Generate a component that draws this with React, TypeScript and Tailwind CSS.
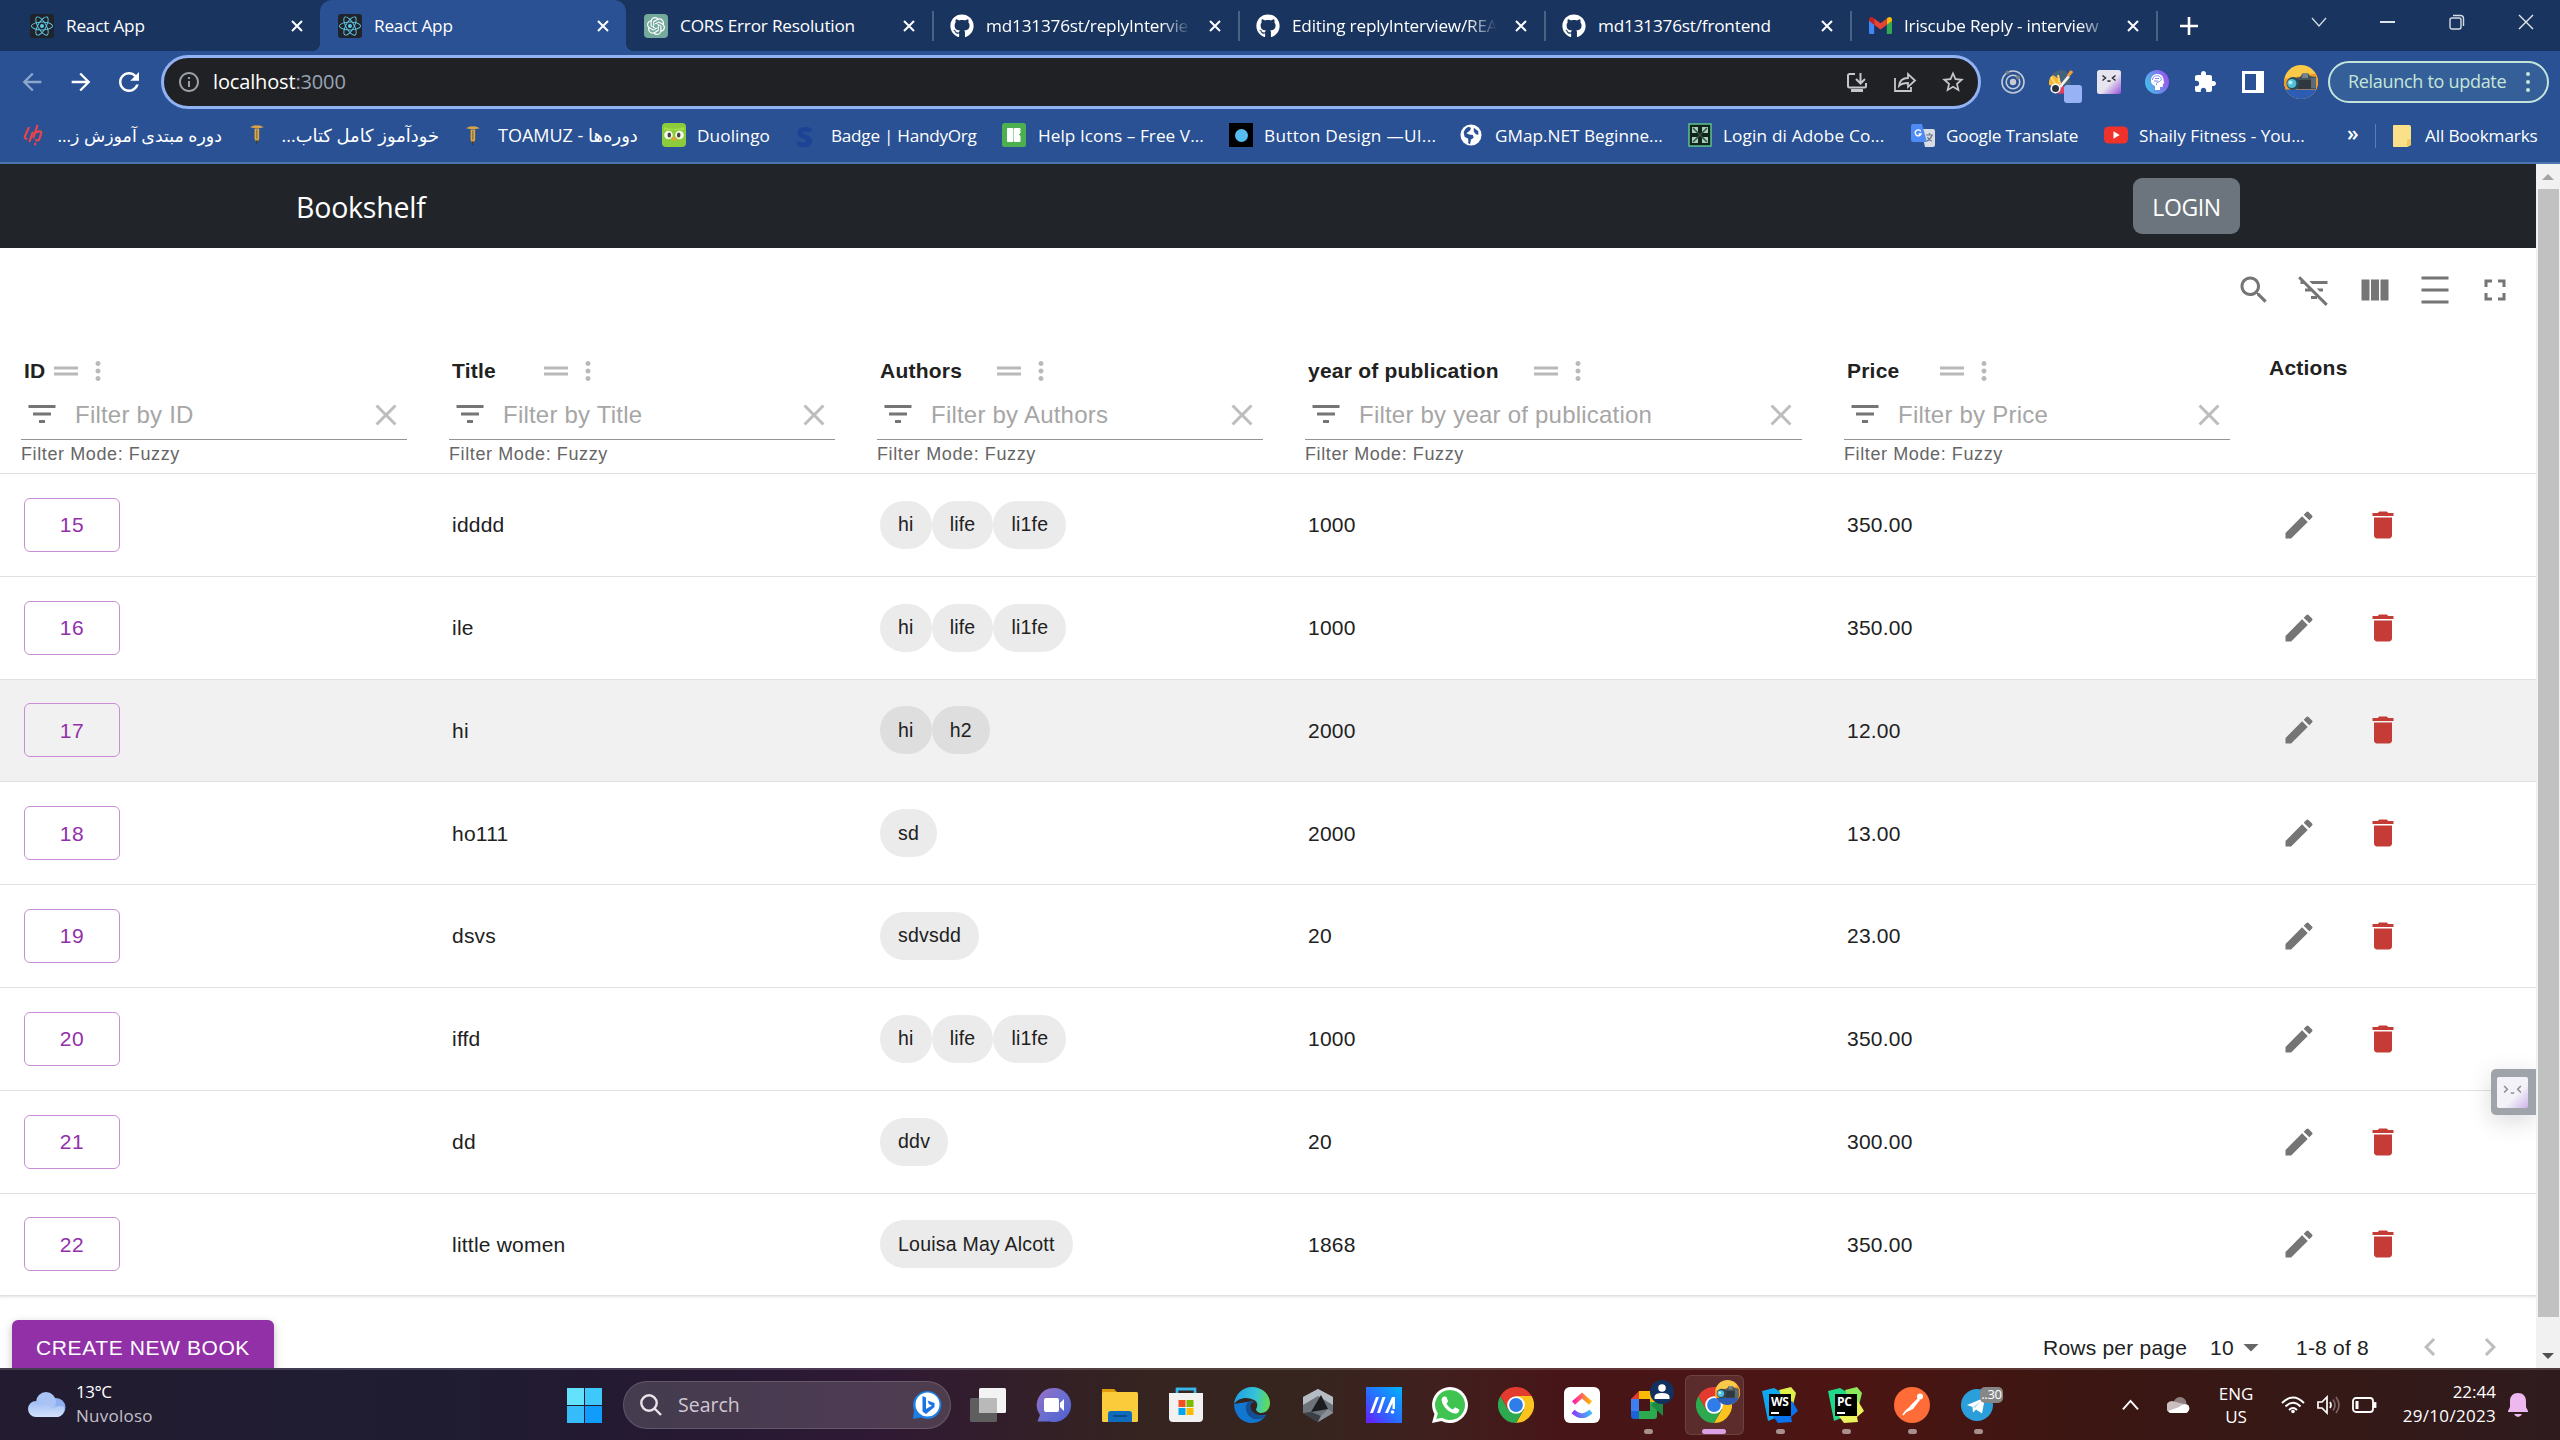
import React from "react";
import { FaReact, FaGithub } from "react-icons/fa";
import { SiOpenai } from "react-icons/si";

type IconProps = { d: string; className?: string };

/* Material-style glyph on a 24-unit grid */
const Glyph = ({ d, className = "size-9" }: IconProps) => (
  <svg viewBox="0 0 24 24" fill="currentColor" className={`shrink-0 ${className}`}>
    <path d={d} />
  </svg>
);

const P = {
  search:
    "M15.5 14h-.79l-.28-.27C15.41 12.59 16 11.11 16 9.5 16 5.91 13.09 3 9.5 3S3 5.91 3 9.5 5.91 16 9.5 16c1.61 0 3.09-.59 4.23-1.57l.27.28v.79l5 4.99L20.49 19l-4.99-5zm-6 0C7.01 14 5 11.99 5 9.5S7.01 5 9.5 5 14 7.01 14 9.5 11.99 14 9.5 14z",
  filterOff:
    "M10.83 8H21V6H8.83l2 2zm5 5H18v-2h-4.17l2 2zM14 16.83V18h-4v-2h3.17l-3-3H6v-2h2.17l-3-3H3V6h.17L1.39 4.22 2.8 2.81l18.38 18.38-1.41 1.41L14 16.83z",
  columns: "M14.67 5v14H9.33V5h5.34zm1 14H21V5h-5.33v14zm-7.34 0V5H3v14h5.33z",
  density: "M3 3h18v2H3zm0 16h18v2H3zm0-8h18v2H3z",
  fullscreen:
    "M7 14H5v5h5v-2H7v-3zm-2-4h2V7h3V5H5v5zm12 7h-3v2h5v-5h-2v3zM14 5v2h3v3h2V5h-5z",
  drag: "M20 9H4v2h16V9zM4 15h16v-2H4v2z",
  more: "M12 8c1.1 0 2-.9 2-2s-.9-2-2-2-2 .9-2 2 .9 2 2 2zm0 2c-1.1 0-2 .9-2 2s.9 2 2 2 2-.9 2-2-.9-2-2-2zm0 6c-1.1 0-2 .9-2 2s.9 2 2 2 2-.9 2-2-.9-2-2-2z",
  filter: "M10 18h4v-2h-4v2zM3 6v2h18V6H3zm3 7h12v-2H6v2z",
  close:
    "M19 6.41 17.59 5 12 10.59 6.41 5 5 6.41 10.59 12 5 17.59 6.41 19 12 13.41 17.59 19 19 17.59 13.41 12z",
  edit: "M3 17.25V21h3.75L17.81 9.94l-3.75-3.75L3 17.25zM20.71 7.04c.39-.39.39-1.02 0-1.41l-2.34-2.34a.9959.9959 0 0 0-1.41 0l-1.83 1.83 3.75 3.75 1.83-1.83z",
  trash: "M6 19c0 1.1.9 2 2 2h8c1.1 0 2-.9 2-2V7H6v12zM19 4h-3.5l-1-1h-5l-1 1H5v2h14V4z",
  left: "M15.41 7.41 14 6l-6 6 6 6 1.41-1.41L10.83 12z",
  right: "M10 6 8.59 7.41 13.17 12l-4.58 4.59L10 18l6-6z",
  drop: "m7 10 5 5 5-5z",
  back: "M20 11H7.83l5.59-5.59L12 4l-8 8 8 8 1.41-1.41L7.83 13H20v-2z",
  forward: "m12 4-1.41 1.41L16.17 11H4v2h12.17l-5.58 5.59L12 20l8-8z",
  reload:
    "M17.65 6.35C16.2 4.9 14.21 4 12 4c-4.42 0-7.99 3.58-7.99 8s3.57 8 7.99 8c3.73 0 6.84-2.55 7.73-6h-2.08c-.82 2.33-3.04 4-5.65 4-3.31 0-6-2.69-6-6s2.69-6 6-6c1.66 0 3.14.69 4.22 1.78L13 11h7V4l-2.35 2.35z",
  info: "M11 7h2v2h-2zm0 4h2v6h-2zm1-9C6.48 2 2 6.48 2 12s4.48 10 10 10 10-4.48 10-10S17.52 2 12 2zm0 18c-4.41 0-8-3.59-8-8s3.59-8 8-8 8 3.59 8 8-3.59 8-8 8z",
  star: "m22 9.24-7.19-.62L12 2 9.19 8.63 2 9.24l5.46 4.73L5.82 21 12 17.27 18.18 21l-1.63-7.03L22 9.24zM12 15.4l-3.76 2.27 1-4.28-3.32-2.88 4.38-.38L12 6.1l1.71 4.04 4.38.38-3.32 2.88 1 4.28L12 15.4z",
  puzzle:
    "M20.5 11H19V7c0-1.1-.9-2-2-2h-4V3.5C13 2.12 11.88 1 10.5 1S8 2.12 8 3.5V5H4c-1.1 0-1.99.9-1.99 2v3.8H3.5c1.49 0 2.7 1.21 2.7 2.7s-1.21 2.7-2.7 2.7H2V20c0 1.1.9 2 2 2h3.8v-1.5c0-1.49 1.21-2.7 2.7-2.7s2.7 1.21 2.7 2.7V22H17c1.1 0 2-.9 2-2v-4h1.5c1.38 0 2.5-1.12 2.5-2.5S21.88 11 20.5 11z",
};

/* ---------- browser tabs ---------- */

const ReactBadge = () => (
  <span className="flex size-6 items-center justify-center rounded-[3px] bg-[#20232a]">
    <FaReact className="size-[22px] text-[#5fc9e8]" />
  </span>
);

const Gmail = () => (
  <svg viewBox="0 0 24 18" className="w-[23px]">
    <path d="M0 2.5V16a2 2 0 0 0 2 2h3.4V8z" fill="#4285f4" />
    <path d="M24 2.5V16a2 2 0 0 1-2 2h-3.4V8z" fill="#34a853" />
    <path d="M18.6 1.5V8L24 4V2.6C24 .2 21.6-.7 19.8.6z" fill="#fbbc04" />
    <path d="M5.4 8V1.5L12 6.5l6.6-5V8L12 13z" fill="#ea4335" />
    <path d="M0 2.6V4l5.4 4V1.5L4.2.6C2.4-.7 0 .2 0 2.6z" fill="#c5221f" />
  </svg>
);

const Github = () => <FaGithub className="size-6 text-white" />;

const OpenAi = () => (
  <span className="flex size-6 items-center justify-center rounded-[4px] bg-[#75a99c]">
    <SiOpenai className="size-[18px] text-white" />
  </span>
);

const tabs = [
  { title: "React App", icon: <ReactBadge />, first: true },
  { title: "React App", icon: <ReactBadge />, active: true },
  { title: "CORS Error Resolution", icon: <OpenAi /> },
  { title: "md131376st/replyIntervie", icon: <Github />, divider: true, fade: true },
  { title: "Editing replyInterview/REA", icon: <Github />, divider: true, fade: true },
  { title: "md131376st/frontend", icon: <Github />, divider: true },
  { title: "Iriscube Reply - interview", icon: <Gmail />, divider: true, fade: true },
];

const CloseX = () => (
  <svg viewBox="0 0 12 12" className="size-3 shrink-0" stroke="#fff" strokeWidth="2">
    <path d="M1 1l10 10M11 1L1 11" />
  </svg>
);

type TabProps = {
  title: string;
  icon: React.ReactNode;
  active?: boolean;
  first?: boolean;
  divider?: boolean;
  fade?: boolean;
};

const Tab = ({ title, icon, active, first, divider, fade }: TabProps) => (
  <div
    className={`relative flex h-[51px] shrink-0 items-center pl-[18px] ${first ? "w-[308px]" : "w-[306px]"} ${
      active ? "rounded-t-xl bg-[#295194]" : ""
    }`}
  >
    {divider && <span className="absolute top-[11px] left-0 h-[30px] w-[2px] bg-[#4b6285]" />}
    {active && (
      <>
        <span className="absolute bottom-0 -left-2 size-2 bg-[radial-gradient(circle_at_0_0,transparent_8px,#295194_8px)]" />
        <span className="absolute -right-2 bottom-0 size-2 bg-[radial-gradient(circle_at_100%_0,transparent_8px,#295194_8px)]" />
      </>
    )}
    <span className="flex w-6 shrink-0 justify-center">{icon}</span>
    <span
      className={`ml-3 shrink-0 text-[17.2px] tracking-[-0.2px] whitespace-nowrap text-white ${
        first ? "w-[209px]" : "w-[207px]"
      } ${fade ? "[mask-image:linear-gradient(to_right,#000_85%,transparent_99%)]" : ""}`}
    >
      {title}
    </span>
    <span className="ml-4">
      <CloseX />
    </span>
  </div>
);

const TabStrip = () => (
  <div className="flex h-[51px] bg-[#19345f] pl-3">
    {tabs.map((t, i) => (
      <Tab key={i} {...t} />
    ))}
    <div className="relative flex w-[66px] items-center justify-center">
      <span className="absolute top-[11px] left-0 h-[30px] w-[2px] bg-[#4b6285]" />
      <svg viewBox="0 0 18 18" className="size-[18px]" stroke="#fff" strokeWidth="2.6">
        <path d="M9 0v18M0 9h18" />
      </svg>
    </div>
    <div className="ml-auto flex h-[43px] items-center">
      <span className="flex w-[69px] justify-center">
        <svg viewBox="0 0 16 10" className="w-4" fill="none" stroke="#d5dbe5" strokeWidth="1.3">
          <path d="M1 1l7 8 7-8" />
        </svg>
      </span>
      <span className="flex w-[69px] justify-center">
        <span className="h-[2px] w-[15px] bg-[#dfe4ec]" />
      </span>
      <span className="flex w-[69px] justify-center">
        <svg viewBox="0 0 16 16" className="size-4" fill="none" stroke="#d5dbe5" strokeWidth="1.4">
          <rect x="1" y="4" width="11" height="11" rx="2" />
          <path d="M4 1.5h7.500a3 3 0 0 1 3 3V12" />
        </svg>
      </span>
      <span className="flex w-[69px] justify-center">
        <svg viewBox="0 0 16 16" className="size-4" fill="none" stroke="#e5e9f0" strokeWidth="1.4">
          <path d="M1 1l14 14M15 1L1 15" />
        </svg>
      </span>
    </div>
  </div>
);

/* ---------- address bar ---------- */

const Face = ({ className = "" }) => (
  <svg viewBox="0 0 24 24" className={className}>
    <defs>
      <linearGradient id="face" x1="0" y1="0" x2="1" y2="1">
        <stop offset="0.55" stopColor="#e6e4ef" />
        <stop offset="1" stopColor="#9a4fd8" />
      </linearGradient>
    </defs>
    <rect width="24" height="24" rx="2.5" fill="url(#face)" />
    <path
      d="M5.500 5.500l3 2.500-3 2.500M18.500 5.500l-3 2.500 3 2.500M10.500 10.500q1.500 1.600 3 0"
      fill="none"
      stroke="#2b2b33"
      strokeWidth="1.5"
    />
  </svg>
);

const FaceTab = ({ className = "" }) => (
  <svg viewBox="0 0 24 24" className={className}>
    <defs>
      <linearGradient id="faceTab" x1="0" y1="0" x2="1" y2="1">
        <stop offset="0.6" stopColor="#f3f2f8" />
        <stop offset="1" stopColor="#cdb4ec" />
      </linearGradient>
    </defs>
    <rect width="24" height="24" rx="1.500" fill="url(#faceTab)" />
    <path
      d="M5.500 7l2.500 2.500L5.500 12M18.500 7L16 9.500l2.500 2.500M10.800 12q1.200 1.200 2.400 0"
      fill="none"
      stroke="#8d8d94"
      strokeWidth="1.2"
    />
  </svg>
);

const Camera = ({ className = "" }) => (
  <svg viewBox="0 0 34 34" className={className}>
    <clipPath id="cam">
      <circle cx="17" cy="17" r="17" />
    </clipPath>
    <g clipPath="url(#cam)">
      <rect width="34" height="34" fill="#fbc94a" />
      <path d="M0 14l34-6v18H0z" fill="#f59a24" />
      <rect y="24.5" width="34" height="10" fill="#2c5cb4" />
      <path d="M6 14l10-2 3-4h5l2 3 6 1v12H12z" fill="#46525a" />
      <path d="M19 8h5v5h-6z" fill="#77848c" />
      <path d="M14 15h13v9H14z" fill="#2f383f" />
      <path d="M27 13h5v10h-5z" fill="#5c6a73" />
      <circle cx="9" cy="18.500" r="6.500" fill="#2d4b57" />
      <circle cx="7.800" cy="18.500" r="4.600" fill="#4fc0d6" />
      <circle cx="6.500" cy="17.500" r="2" fill="#b2f0f6" />
    </g>
  </svg>
);

const Toolbar = () => (
  <div className="flex h-[62px] items-center bg-[#295194] pl-2">
    <span className="flex w-12 justify-center text-[#8fa6cb]">
      <Glyph d={P.back} className="size-7" />
    </span>
    <span className="flex w-[50px] justify-center text-white">
      <Glyph d={P.forward} className="size-7" />
    </span>
    <span className="flex w-[46px] justify-center text-white">
      <Glyph d={P.reload} className="size-[30px]" />
    </span>
    <div className="ml-[9px] flex h-[54px] w-[1820px] items-center rounded-full border-[3px] border-[#92b2f3] bg-[#202124] pl-[13px]">
      <Glyph d={P.info} className="size-6 text-[#9aa0a6]" />
      <span className="ml-[12px] pb-px text-[20px] tracking-[-0.15px] text-white">
        localhost<span className="text-[#9aa3b5]">:3000</span>
      </span>
      <div className="ml-auto flex items-center pr-[1px] text-[#c4c7cc]">
        <span className="flex w-12 justify-center">
          <svg viewBox="0 0 24 24" className="size-6" fill="none" stroke="currentColor" strokeWidth="2">
            <path d="M10 4H4.500a1.500 1.500 0 0 0-1.500 1.500V16a1.500 1.500 0 0 0 1.500 1.500h15A1.500 1.500 0 0 0 21 16v-3M15.500 3v10M11 9l4.500 4.500L20 9" />
            <path d="M6 20.500h12" strokeWidth="3" />
          </svg>
        </span>
        <span className="flex w-12 justify-center">
          <svg viewBox="0 0 24 24" className="size-6" fill="none" stroke="currentColor" strokeWidth="1.8">
            <path d="M2 8v13h16v-4" />
            <path d="M6 16c.5-5 4-8 9-8V4l7 6.500-7 6.500v-4c-4 0-7 .8-9 3z" />
          </svg>
        </span>
        <span className="flex w-12 justify-center">
          <Glyph d={P.star} className="size-[26px]" />
        </span>
      </div>
    </div>
    <div className="ml-2 flex items-center">
      <span className="flex w-12 justify-center">
        <svg viewBox="0 0 24 24" className="size-6" fill="none" stroke="#c3cad6">
          <circle cx="12" cy="12" r="11" strokeWidth="1.600" />
          <circle cx="12" cy="12" r="6.800" strokeWidth="1.600" />
          <circle cx="12" cy="12" r="3.200" fill="#c9cbd0" stroke="none" />
          <circle cx="6.500" cy="2.500" r="2" fill="#7f8287" stroke="none" />
          <circle cx="17" cy="7.500" r="2" fill="#7f8287" stroke="none" />
        </svg>
      </span>
      <span className="relative flex w-12 justify-center">
        <svg viewBox="0 0 24 24" className="size-6">
          <path d="M3 4Q10-2 17 1l5 12-2 3-10-2z" fill="#42617a" />
          <path d="M0 12q0-4 4-7l6 4 2 5-4 3-8-2z" fill="#f7b733" />
          <path d="M2 7l5 8M9 5l2 9" stroke="#ffd873" strokeWidth="2" />
          <path d="M13 14l6 9-10 1z" fill="#e23c62" />
          <path d="M10 16L19 5l2 2-9 11z" fill="#f6f1e8" />
          <path d="M18 5l3-4.500q3-.5 3 2L20 7z" fill="#f49b35" />
          <circle cx="6.500" cy="18.500" r="4.300" fill="#26333f" stroke="#fff" strokeWidth="1.600" />
        </svg>
        <span className="absolute top-[15px] left-[27px] h-[18px] w-[18px] rounded-[3px] bg-[#97b3f5]" />
      </span>
      <span className="flex w-12 justify-center">
        <Face className="size-6" />
      </span>
      <span className="flex w-12 justify-center">
        <svg viewBox="0 0 24 24" className="size-6">
          <defs>
            <linearGradient id="brain" x1="0" y1="0.6" x2="1" y2="0.2">
              <stop offset="0" stopColor="#45bdea" />
              <stop offset="1" stopColor="#a04ff0" />
            </linearGradient>
          </defs>
          <circle cx="12" cy="12" r="12" fill="url(#brain)" />
          <path d="M10 20v-4c-3-1-4.500-3.500-4-6.500C6.500 6 9 4 12.500 4c4 0 6 3 6 6l.8 3-1.300.7-.3 3.300h-2.700v3z" fill="#fff" />
          <path d="M7.500 10c0-3 3-5 6-4s4 4 1 5.500-3 .5-3 3.500M10 8.500h4M9 11h4" fill="none" stroke="#7f87ee" strokeWidth="1" />
        </svg>
      </span>
      <span className="flex w-12 justify-center text-white">
        <Glyph d={P.puzzle} className="size-6" />
      </span>
      <span className="flex w-12 justify-center">
        <span className="size-[22px] border-[3px] border-r-[8px] border-white" />
      </span>
      <span className="flex w-12 justify-center">
        <Camera className="size-[34px]" />
      </span>
    </div>
    <div className="ml-[3px] flex h-[42px] w-[221px] items-center rounded-full border-2 border-[#c4e3da] bg-[#355f99] pl-[18px] text-[#c6e6d8]">
      <span className="pb-px text-[18px] tracking-[-0.3px] whitespace-nowrap">Relaunch to update</span>
      <span className="mr-[17px] ml-auto flex flex-col gap-1">
        <span className="size-1 rounded-full bg-current" />
        <span className="size-1 rounded-full bg-current" />
        <span className="size-1 rounded-full bg-current" />
      </span>
    </div>
  </div>
);

/* ---------- bookmarks ---------- */

const Pen = () => (
  <svg viewBox="0 0 15 24" className="h-[22px]">
    <path d="M0 3.500q4-2.500 7.500-2Q11 1 15 3.500l-4 .8H4z" fill="#d9a24a" />
    <path d="M5 5h5v11l-2.500 5L5 16z" fill="#e0a93f" />
    <path d="M6.500 18h2l-1 5z" fill="#222" />
    <path d="M7 6h1v10H7z" fill="#6b5a3a" />
  </svg>
);

const Slashes = () => (
  <svg viewBox="0 0 22 24" className="w-[21px]" stroke="#e8454a" strokeWidth="2.300" strokeLinecap="round" fill="none">
    <path d="M6 4L2 13q-.5 2 1.500 2.500M10 9l-3 9M15 2l-4 12M13.500 9l4-1.500q2 .5 1.500 2.500l-2 6q-1 2-3.500 1M13 20.500l-.3 1" />
  </svg>
);

const Duo = () => (
  <svg viewBox="0 0 24 24" className="size-6">
    <rect width="24" height="24" rx="4" fill="#8ccc3c" />
    <path d="M2 4q10 4 20 0v3H2z" fill="#a4de4c" />
    <circle cx="6.500" cy="12" r="4.300" fill="#f4f9ea" />
    <circle cx="17.500" cy="12" r="4.300" fill="#f4f9ea" />
    <ellipse cx="7.300" cy="12" rx="1.800" ry="2.600" fill="#444" />
    <ellipse cx="16.700" cy="12" rx="1.800" ry="2.600" fill="#444" />
    <path d="M9 14.500h6l-3 4z" fill="#f49b2b" />
  </svg>
);

const Icons8 = () => (
  <svg viewBox="0 0 24 24" className="size-6">
    <rect width="24" height="24" rx="2.500" fill="#4caf50" />
    <path d="M5.500 5.500h5.500v13H5.500zM12.500 5.500h5.500V10l-1.500 1.500L18 13v5.500h-5.500z" fill="#fff" stroke="#fff" />
  </svg>
);

const Dot = () => (
  <span className="flex size-6 items-center justify-center bg-black">
    <span className="size-[13px] rounded-full bg-[#54bdf2]" />
  </span>
);

const Globe = () => (
  <svg viewBox="0 0 24 24" className="size-[22px]">
    <circle cx="12" cy="12" r="11.500" fill="#fff" />
    <path d="M4 9q1-4 5-6l3 1-1 3-4 3 3 1.500 4 .5 1 3-3 2-1 5-2-1v-5l-4-2z" fill="#295194" />
    <path d="M15 4l5 4v4l-3-1-2-3z" fill="#295194" />
  </svg>
);

const Adobe = () => (
  <svg viewBox="0 0 24 24" className="size-6">
    <rect x="1" y="1" width="22" height="22" fill="#10241c" stroke="#5ec48c" strokeWidth="1.500" />
    <path d="M4 4h6v6H4zM14 4h6v6h-6zM4 14h6v6H4zM14 14h6v6h-6z" fill="#a9cdb9" />
    <path d="M5 5l14 14M19 5L5 19" stroke="#2f5342" strokeWidth="1.500" />
  </svg>
);

const Translate = () => (
  <svg viewBox="0 0 24 24" className="size-6">
    <path d="M10 6h12a2 2 0 0 1 2 2v14a2 2 0 0 1-2 2h-8z" fill="#d9dde3" />
    <path d="M2 1h9l5 18H2a2 2 0 0 1-2-2V3a2 2 0 0 1 2-2z" fill="#4f8bf5" />
    <path d="M15 12h7M18.500 10v2M21 12c-1 4-3 5-5 6M16.500 14c1 2 3 4 4.500 4" stroke="#6d7786" strokeWidth="1.200" fill="none" />
    <path d="M9.800 8.300A3 3 0 1 0 10 11H7.500" stroke="#fff" strokeWidth="1.400" fill="none" />
  </svg>
);

const YouTube = () => (
  <svg viewBox="0 0 24 24" className="w-6">
    <rect y="3.500" width="24" height="17" rx="4.500" fill="#f0322b" />
    <path d="M9.500 8.300v7.400l6.200-3.700z" fill="#fff" />
  </svg>
);

type Bookmark = { label: string; icon: React.ReactNode; cell: string; pad: string; rtl?: boolean; text?: string };

const bookmarks: Bookmark[] = [
  { label: "دوره مبتدی آموزش ز...", icon: <Slashes />, cell: "w-[227px]", pad: "w-[34px]", rtl: true, text: "w-[165px] text-[17.4px]" },
  { label: "خودآموز کامل کتاب...", icon: <Pen />, cell: "w-[216px]", pad: "w-[32px]", rtl: true, text: "w-[157px] text-[17.9px]" },
  { label: "TOAMUZ - دوره‌ها", icon: <Pen />, cell: "w-[196px]", pad: "w-[32px]", text: "w-[142px] text-[18px]" },
  { label: "Duolingo", icon: <Duo />, cell: "w-[134px]", pad: "w-[35px]", text: "tracking-[0.1px]" },
  {
    label: "Badge | HandyOrg",
    icon: <span className="text-[29px] leading-none font-black text-[#1c4396]">S</span>,
    cell: "w-[206px]",
    pad: "w-[35px]",
    text: "tracking-[-0.28px]",
  },
  { label: "Help Icons – Free V...", icon: <Icons8 />, cell: "w-[227px]", pad: "w-[36px]", text: "tracking-[0.05px]" },
  { label: "Button Design —UI...", icon: <Dot />, cell: "w-[231px]", pad: "w-[35px]", text: "tracking-[0.3px]" },
  { label: "GMap.NET Beginne...", icon: <Globe />, cell: "w-[228px]", pad: "w-[35px]", text: "tracking-[0px]" },
  { label: "Login di Adobe Co...", icon: <Adobe />, cell: "w-[223px]", pad: "w-[35px]", text: "tracking-[0.15px]" },
  { label: "Google Translate", icon: <Translate />, cell: "w-[193px]", pad: "w-[35px]", text: "tracking-[-0.2px]" },
  { label: "Shaily Fitness - You...", icon: <YouTube />, cell: "w-[243px]", pad: "w-[35px]", text: "tracking-[0px]" },
];

const Bookmarks = () => (
  <div className="flex h-[51px] items-center border-b-2 border-[#4c76ad] bg-[#295194] pb-[4px] pl-[23px] text-[17.2px] text-white">
    {bookmarks.map((b) => (
      <div key={b.label} className={`flex shrink-0 items-center ${b.cell}`}>
        <span className={`flex shrink-0 ${b.pad}`}>{b.icon}</span>
        <span dir={b.rtl ? "rtl" : "ltr"} className={`whitespace-nowrap ${b.text ?? ""}`}>
          {b.label}
        </span>
      </div>
    ))}
    <span className="w-[28px] pb-[4px] text-[21px] leading-none font-semibold">»</span>
    <span className="h-6 w-px bg-[#5b7db3]" />
    <svg viewBox="0 0 18 22" className="ml-[17px] w-[18px]">
      <path d="M1 0h15a2 2 0 0 1 2 2v18l-4 2H1a1 1 0 0 1-1-1V1a1 1 0 0 1 1-1z" fill="#fbe08a" />
      <path d="M14 22v-6q0-2 2-2h2v6z" fill="#f2cc5b" />
    </svg>
    <span className="ml-[14px] tracking-[-0.15px] whitespace-nowrap">All Bookmarks</span>
  </div>
);

/* ---------- page ---------- */

const columns = [
  { title: "ID", width: "w-[428px]", gap: "ml-[3px]" },
  { title: "Title", width: "w-[428px]", gap: "ml-[42px]" },
  { title: "Authors", width: "w-[428px]", gap: "ml-[29px]" },
  { title: "year of publication", width: "w-[539px]", gap: "ml-[29px]" },
  { title: "Price", width: "w-[428px]", gap: "ml-[35px]" },
];

const rows = [
  { id: 15, title: "idddd", authors: ["hi", "life", "li1fe"], year: "1000", price: "350.00" },
  { id: 16, title: "ile", authors: ["hi", "life", "li1fe"], year: "1000", price: "350.00" },
  { id: 17, title: "hi", authors: ["hi", "h2"], year: "2000", price: "12.00", hover: true },
  { id: 18, title: "ho111", authors: ["sd"], year: "2000", price: "13.00" },
  { id: 19, title: "dsvs", authors: ["sdvsdd"], year: "20", price: "23.00" },
  { id: 20, title: "iffd", authors: ["hi", "life", "li1fe"], year: "1000", price: "350.00" },
  { id: 21, title: "dd", authors: ["ddv"], year: "20", price: "300.00" },
  { id: 22, title: "little women", authors: ["Louisa May Alcott"], year: "1868", price: "350.00" },
];

const HeaderCell = ({ title, width, gap }: (typeof columns)[number]) => (
  <div className={`shrink-0 px-[21px] ${width}`}>
    <div className="flex h-9 items-center pl-[3px] text-[21px] font-bold tracking-[0.22px] text-[#212121]">
      <span className="whitespace-nowrap">{title}</span>
      <span className={`flex items-center text-[#b9b9b9] ${gap}`}>
        <Glyph d={P.drag} />
        <Glyph d={P.more} className="-ml-px size-[30px]" />
      </span>
    </div>
    <div className="flex h-[51px] items-center border-b border-[#949494] pl-[3px]">
      <Glyph d={P.filter} className="size-9 text-[#757575]" />
      <span className="ml-[15px] pt-[2px] text-[24px] tracking-[0.22px] whitespace-nowrap text-[#a6a6a6]">
        Filter by {title}
      </span>
      <span className="mr-[3px] ml-auto flex pt-px text-[#bdbdbd]">
        <Glyph d={P.close} className="size-9" />
      </span>
    </div>
    <div className="pt-[3px] text-[18px] leading-[22px] tracking-[0.6px] text-[#666]">Filter Mode: Fuzzy</div>
  </div>
);

const Page = () => (
  <div className="relative w-[2536px] overflow-hidden bg-white [font-family:'Liberation_Sans',sans-serif]">
    <nav className="flex h-[84px] items-center justify-between bg-[#212529] px-[296px] [font-family:'Open_Sans',sans-serif] text-white">
      <span className="pt-[2px] text-[28.5px] tracking-[-0.2px]">Bookshelf</span>
      <button className="flex h-14 w-[107px] items-center justify-center rounded-[9px] bg-[#6c757d] pt-[2px] text-[23px] tracking-[-0.4px]">
        LOGIN
      </button>
    </nav>

    <div className="flex h-[84px] items-center justify-end pr-[11px] text-[#757575]">
      {[P.search, P.filterOff, P.columns, P.density, P.fullscreen].map((d) => (
        <span key={d} className="flex w-[60.2px] justify-center">
          <Glyph d={d} />
        </span>
      ))}
    </div>

    <div className="flex h-[142px] border-b border-[#e0e0e0] pt-[21px]">
      {columns.map((c) => (
        <HeaderCell key={c.title} {...c} />
      ))}
      <div className="flex h-[30px] items-center pl-[18px] text-[21px] font-bold tracking-[0.22px] text-[#212121]">
        Actions
      </div>
    </div>

    {rows.map((r) => (
      <div
        key={r.id}
        className={`flex h-[102.8px] items-center border-b border-[#e0e0e0] text-[21px] tracking-[0.22px] text-[#212121] ${
          r.hover ? "bg-[#f1f1f1]" : ""
        }`}
      >
        <div className="w-[428px] shrink-0 pl-6">
          <span className="flex h-[54px] w-24 items-center justify-center rounded-md border border-[#c98fd6] tracking-[0.5px] text-[#9230ab]">
            {r.id}
          </span>
        </div>
        <div className="w-[428px] shrink-0 pl-6">{r.title}</div>
        <div className="flex w-[428px] shrink-0 pl-6">
          {r.authors.map((a) => (
            <span
              key={a}
              className={`flex h-12 items-center rounded-full px-[18px] text-[19.5px] tracking-[0.22px] ${
                r.hover ? "bg-[#dedede]" : "bg-[#ebebeb]"
              }`}
            >
              {a}
            </span>
          ))}
        </div>
        <div className="w-[539px] shrink-0 pl-6">{r.year}</div>
        <div className="w-[428px] shrink-0 pl-6">{r.price}</div>
        <div className="flex gap-[48px] pl-[30px] text-[#757575]">
          <Glyph d={P.edit} />
          <Glyph d={P.trash} className="size-9 text-[#c43c35]" />
        </div>
      </div>
    ))}

    <div className="flex h-[102px] items-center pl-3 shadow-[inset_0_3px_3px_-2px_rgba(0,0,0,0.12)]">
      <button className="flex h-[55px] w-[262px] items-center justify-center rounded-md bg-[#9230a8] text-[21px] tracking-[0.6px] whitespace-nowrap text-white shadow-[0_3px_8px_rgba(0,0,0,0.25)]">
        CREATE NEW BOOK
      </button>
      <div className="ml-auto flex items-center text-[21px] tracking-[0.22px] text-[#212121]">
        <span className="w-[167px]">Rows per page</span>
        <span className="w-[23px]">10</span>
        <Glyph d={P.drop} className="size-9 text-[#666]" />
        <span className="ml-[27px] w-[117px]">1-8 of 8</span>
        <span className="flex w-[61px] text-[#bdbdbd]">
          <Glyph d={P.left} className="-ml-px size-9" />
        </span>
        <span className="flex w-[62px] text-[#bdbdbd]">
          <Glyph d={P.right} className="-ml-0.5 size-9" />
        </span>
      </div>
    </div>

    <div className="absolute top-[905px] right-0 flex h-[46px] w-[45px] items-center rounded-l-[5px] bg-[#9fa3aa] pl-[6px] shadow-[0_6px_24px_rgba(0,0,0,0.15)]">
      <FaceTab className="size-[31px]" />
    </div>
  </div>
);

const Scrollbar = () => (
  <div className="flex w-6 flex-col items-center bg-[#f1f1f1]">
    <span className="flex h-[25px] items-center justify-center">
      <span className="border-x-[6px] border-b-[6px] border-x-transparent border-b-[#a3a3a3]" />
    </span>
    <span className="h-[1128px] w-[21px] bg-[#c1c1c1]" />
    <span className="mt-[36px] border-x-[6px] border-t-[6px] border-x-transparent border-t-[#505050]" />
  </div>
);

/* ---------- taskbar ---------- */

const Chrome = () => (
  <svg viewBox="0 0 36 36" className="size-9">
    <path d="M18 9h15.600A18 18 0 0 1 18 36l7.800-13.500z" fill="#fcc31e" />
    <path d="M10.200 22.500L2.400 9A18 18 0 0 0 18 36l7.800-13.500L18 18z" fill="#2da94f" />
    <path d="M33.600 9H18l-7.800 13.500L2.400 9A18 18 0 0 1 33.600 9z" fill="#e33b2e" />
    <circle cx="18" cy="18" r="8.800" fill="#fff" />
    <circle cx="18" cy="18" r="6.900" fill="#2f7de9" />
  </svg>
);

const Ide = ({ code, a, b, c }: { code: string; a: string; b: string; c: string }) => (
  <span className="relative flex size-9 items-center justify-center">
    <svg viewBox="0 0 36 36" className="absolute inset-0 size-9">
      <path d="M0 4l12-3 10 6-4 22-12 5z" fill={a} />
      <path d="M17 3l12-3 5 6-3 12-10-4z" fill={b} />
      <path d="M30 14l6 10-7 6 1 5-14 1-6-8z" fill={c} />
    </svg>
    <span className="relative flex size-[22px] flex-col bg-black pt-[1px] pl-[2px] text-[12px] leading-[13px] font-bold tracking-[-0.3px] text-white">
      {code}
      <span className="mt-[4px] h-[2px] w-2 bg-white" />
    </span>
  </span>
);

const taskIcons: { node: React.ReactNode; run?: boolean; active?: boolean }[] = [
  {
    node: (
      <svg viewBox="0 0 36 36" className="size-9">
        <rect x="0" y="11" width="27" height="24" rx="1.500" fill="#5e5e5e" />
        <rect x="9" y="1" width="27" height="25" rx="1.500" fill="#f3f3f3" />
        <rect x="9" y="11" width="18" height="15" fill="#b9b9b9" />
      </svg>
    ),
  },
  {
    node: (
      <svg viewBox="0 0 36 36" className="size-9">
        <defs>
          <linearGradient id="chat" x1="0" y1="0" x2="1" y2="1">
            <stop offset="0" stopColor="#9a6fc4" />
            <stop offset="0.5" stopColor="#6c6fd0" />
            <stop offset="1" stopColor="#4b5fd0" />
          </linearGradient>
        </defs>
        <path d="M18 1a17 17 0 1 1-4 33.500H1.500L4 28A17 17 0 0 1 18 1z" fill="url(#chat)" />
        <rect x="8" y="11" width="15" height="14" rx="2" fill="#fff" />
        <path d="M24 16l4-4v12l-4-4z" fill="#fff" />
      </svg>
    ),
  },
  {
    node: (
      <svg viewBox="0 0 36 36" className="size-9">
        <path d="M0 2h12l3 3v8H0z" fill="#e09a0a" />
        <rect y="5" width="36" height="30" rx="1.500" fill="#fccb3c" />
        <path d="M6 35V27q0-3 3-3h18q3 0 3 3v8z" fill="#0f6cbd" />
        <path d="M11 29h14" stroke="#0a4b8c" strokeWidth="2" />
      </svg>
    ),
  },
  {
    node: (
      <svg viewBox="0 0 36 36" className="size-9">
        <path d="M9 8V2h18v6" fill="none" stroke="#38b6ee" strokeWidth="2.400" />
        <path d="M1 6h34v25a4 4 0 0 1-4 4H5a4 4 0 0 1-4-4z" fill="#f1f1f1" />
        <path d="M10.500 13h7v7h-7z" fill="#f25022" />
        <path d="M18.500 13h7v7h-7z" fill="#7fba00" />
        <path d="M10.500 21h7v7h-7z" fill="#00a4ef" />
        <path d="M18.500 21h7v7h-7z" fill="#ffb900" />
        <path d="M9 6V2h18v4" fill="none" stroke="#38b6ee" strokeWidth="2.400" />
      </svg>
    ),
  },
  {
    node: (
      <svg viewBox="0 0 36 36" className="size-9">
        <defs>
          <linearGradient id="edge" x1="0" y1="0.3" x2="1" y2="0.4">
            <stop offset="0" stopColor="#1f9fe6" />
            <stop offset="0.6" stopColor="#35c3d6" />
            <stop offset="1" stopColor="#62dc52" />
          </linearGradient>
        </defs>
        <path d="M0 17C0 28 8 36 18 36c6 0 11-3 14-8l-8-2-5-12z" fill="#1277d0" />
        <path d="M0 17C1 7 9 0 18 0c11 0 18 8 18 16 0 6-4 10-9 10-4 0-6-2-5-4 2-3 2-7-2-9C13 9 4 11 0 17z" fill="url(#edge)" />
        <path d="M19 14c-5-1-8 4-7 9 2 9 12 13 21 5-6 2-15-1-15-8 0-3 1-4 1-6z" fill="#124f95" />
        <path d="M20 15c-3 0-4 4-3 7 2 5 9 8 16 5-4 0-11-1-11-5 1-3 1-6-2-7z" fill="#35221f" />
      </svg>
    ),
  },
  {
    node: (
      <svg viewBox="0 0 36 36" className="size-9">
        <path d="M18 2l15 8v16l-15 9-15-9V10z" fill="#6d737a" />
        <path d="M18 2l15 8v8L18 9 3 18v-8z" fill="#b5bcc4" />
        <path d="M21 8l7 14-17 3z" fill="#1b1c20" />
        <path d="M3 26l8-1 10 4-3 6z" fill="#3b3f45" />
        <path d="M33 26l-5-4-7 7-3 6z" fill="#8b9198" />
      </svg>
    ),
  },
  {
    node: (
      <svg viewBox="0 0 36 36" className="size-9">
        <defs>
          <linearGradient id="ma" x1="0" y1="1" x2="1" y2="0">
            <stop offset="0" stopColor="#6a1bff" />
            <stop offset="0.45" stopColor="#2a6bff" />
            <stop offset="1" stopColor="#00b4ff" />
          </linearGradient>
        </defs>
        <rect width="36" height="36" fill="url(#ma)" />
        <path d="M4 26h3l6-16h-3zM11 26h3l5.500-16h-3zM19 26l7-16h3v12h-2.500V16L22 26z" fill="#fff" />
        <circle cx="26.500" cy="25" r="1.800" fill="#fff" />
      </svg>
    ),
  },
  {
    node: (
      <svg viewBox="0 0 36 36" className="size-9">
        <path d="M18 0a18 18 0 1 1-8.500 33.900L0 36l2.500-9A18 18 0 0 1 18 0z" fill="#fff" />
        <path d="M18 3a15 15 0 1 1-8 27.700L4.300 32l1.500-5.500A15 15 0 0 1 18 3z" fill="#3fc351" />
        <path d="M12.500 9.500c-2 0-3 2-2.800 4 .6 6 8 13 13.800 13 2.500 0 4-2 3.800-4l-4.300-2.200-2 2.200c-3-1-5.500-3.500-6.500-6l1.700-2-1.700-4.500z" fill="#fff" />
      </svg>
    ),
  },
  { node: <Chrome /> },
  {
    node: (
      <svg viewBox="0 0 36 36" className="size-9">
        <defs>
          <linearGradient id="cu1" x1="0" x2="1">
            <stop offset="0" stopColor="#ff1fae" />
            <stop offset="1" stopColor="#ffb703" />
          </linearGradient>
          <linearGradient id="cu2" x1="0" x2="1">
            <stop offset="0" stopColor="#8a3cf7" />
            <stop offset="1" stopColor="#3fbcf8" />
          </linearGradient>
        </defs>
        <rect width="36" height="36" rx="6" fill="#fff" />
        <path d="M9.500 16L18 8.500l8.500 7.500" fill="none" stroke="url(#cu1)" strokeWidth="4.500" />
        <path d="M9 24.500q9 8.500 18 0" fill="none" stroke="url(#cu2)" strokeWidth="4.500" />
      </svg>
    ),
  },
  {
    run: true,
    node: (
      <span className="relative block size-9">
        <svg viewBox="0 0 36 36" className="size-9">
          <path d="M1 12l8-8v8z" fill="#e33b2e" />
          <path d="M9 4h15q3 0 3 3v8h-7v-3H9z" fill="#fcbc05" />
          <path d="M1 12h8v12H1z" fill="#3f7ff0" />
          <path d="M1 24h8v8H4q-3 0-3-3z" fill="#1a63d8" />
          <path d="M9 24h11v-9h7v14q0 3-3 3H9z" fill="#2da94f" />
          <path d="M21 18l12-9v20z" fill="#1d8a44" />
        </svg>
        <svg viewBox="0 0 24 24" className="absolute -top-[7px] left-[20px] size-6">
          <circle cx="12" cy="12" r="12" fill="#12315e" />
          <circle cx="12" cy="8" r="3.800" fill="#fff" />
          <path d="M4.500 19v-2q0-4 7.500-4t7.500 4v2z" fill="#fff" />
        </svg>
      </span>
    ),
  },
  {
    run: true,
    active: true,
    node: (
      <span className="relative block size-9">
        <Chrome />
        <Camera className="absolute -top-[7px] left-[19px] size-[25px]" />
      </span>
    ),
  },
  { run: true, node: <Ide code="WS" a="#0fa8f0" b="#dff04a" c="#0a73f0" /> },
  { run: true, node: <Ide code="PC" a="#21d789" b="#8be95b" c="#e9f25a" /> },
  {
    run: true,
    node: (
      <svg viewBox="0 0 36 36" className="size-9">
        <circle cx="18" cy="18" r="18" fill="#ff6c37" />
        <circle cx="26" cy="9.500" r="3" fill="#fff" />
        <path d="M24 11l2 2-7 9-3-3z" fill="#fff" />
        <path d="M18 19l-6 5-3 4M19 21l-8 4" stroke="#fff" strokeWidth="1.800" fill="none" />
      </svg>
    ),
  },
  {
    run: true,
    node: (
      <span className="relative block size-9">
        <svg viewBox="0 0 36 36" className="size-9">
          <circle cx="17" cy="18" r="16" fill="#2b9fda" />
          <path d="M7 18l18-7.500-3 16-6-4-3 3-.5-5.500z" fill="#fff" />
          <path d="M13 20l8-6-6 7z" fill="#b9d9ec" />
        </svg>
        <span className="absolute top-0 left-[20px] flex h-4 w-[23px] items-center justify-center rounded-[5px] bg-[#868686] text-[13px] tracking-[-0.3px] text-white">
          ..30
        </span>
      </span>
    ),
  },
];

const Taskbar = () => (
  <div className="flex h-[72px] items-center border-t-2 border-white/15 bg-[linear-gradient(90deg,#231c30_0%,#1f1c32_17%,#261931_27%,#2f1935_34%,#35241f_45%,#36251f_51%,#40201e_56%,#471518_61%,#4c1513_72%,#3c1612_81%,#341917_92%,#2f1b1e_100%)] bg-origin-border text-white">
    <div className="flex w-[567px] items-center pb-[2px] pl-[28px]">
      <svg viewBox="0 0 38 25" className="w-[38px]">
        <defs>
          <linearGradient id="wx" x1="0" y1="0" x2="0" y2="1">
            <stop offset="0" stopColor="#9dbcf3" />
            <stop offset="1" stopColor="#d3e2fb" />
          </linearGradient>
        </defs>
        <circle cx="28" cy="15.500" r="9.500" fill="#8eb0f0" />
        <circle cx="18" cy="10" r="10" fill="#a9c3f5" />
        <path d="M8 9a8 8 0 1 0 0 16h22a8 8 0 0 0 6-10q-6-3-12 2Q18 9 8 9z" fill="url(#wx)" />
      </svg>
      <div className="ml-[10px] flex flex-col text-[17px] leading-6">
        <span className="tracking-[-0.5px]">13°C</span>
        <span className="tracking-[0.25px] text-[#c3c0c9]">Nuvoloso</span>
      </div>
    </div>
    <div className="grid size-[35px] grid-cols-2 gap-px">
      <span className="bg-[#63e2fb]" />
      <span className="bg-[#3fc8fb]" />
      <span className="bg-[#36bbfb]" />
      <span className="bg-[#109cfb]" />
    </div>
    <div className="ml-[21px] flex h-12 w-[328px] items-center rounded-full border border-white/15 bg-white/15 pl-[16px]">
      <svg viewBox="0 0 22 22" className="size-[22px]" fill="none" stroke="#e8e4ea" strokeWidth="2.400">
        <circle cx="9" cy="9" r="7.700" />
        <path d="M14.500 14.500L21 21" />
      </svg>
      <span className="ml-4 pb-px text-[19.5px] text-[#cfc8d2]">Search</span>
      <svg viewBox="0 0 30 30" className="mr-[8px] ml-auto size-[30px]">
        <path d="M15 1a14 14 0 1 1-6 26.500L1 29l1-9A14 14 0 0 1 15 1z" fill="#1b7fe6" />
        <circle cx="15.500" cy="14.500" r="12" fill="#fff" />
        <path d="M10.500 6l3.500 1.500V19l6-3.500-3-1.300-1.500-3.700 7 2.500v4L14 24l-3.500-2.500z" fill="#1b74e4" />
      </svg>
    </div>
    <div className="ml-1 flex">
      {taskIcons.map((t, i) => (
        <div key={i} className="flex w-[66px] justify-center">
          <div
            className={`flex h-[60px] w-[59px] flex-col items-center rounded-md ${
              t.active ? "border border-white/10 bg-white/10 pt-[11px]" : "pt-[12px]"
            }`}
          >
            {t.node}
            {t.run && (
              <span
                className={`mt-[6px] h-[5px] shrink-0 rounded-full ${t.active ? "w-6 bg-[#d9a0e6]" : "w-[9px] bg-[#a8908f]"}`}
              />
            )}
          </div>
        </div>
      ))}
    </div>
    <div className="ml-auto flex items-center">
      <svg viewBox="0 0 18 12" className="w-[17px]" fill="none" stroke="#fff" strokeWidth="2">
        <path d="M1 11l8-9 8 9" />
      </svg>
      <svg viewBox="0 0 24 16" className="ml-[28px] w-6">
        <circle cx="13" cy="6.500" r="6.500" fill="#8f8080" />
        <path d="M5 4a6 6 0 0 0 0 12h14a5 5 0 0 0 2-8z" fill="#c9bfbf" />
        <path d="M3 16h16a5 5 0 0 0 2-8q-5-2-9 2-5 2-11 4z" fill="#fff" />
      </svg>
      <div className="ml-[22px] flex w-[46px] flex-col pb-px text-center text-[17px] leading-[23px]">
        <span>ENG</span>
        <span>US</span>
      </div>
      <svg viewBox="0 0 24 18" className="ml-[22px] w-6" fill="none" stroke="#fff" strokeWidth="1.900">
        <path d="M1 7q11-11 22 0M4.500 10.500q7.500-7.500 15 0M8 14q4-4 8 0" />
        <circle cx="12" cy="15.500" r="1.800" fill="#fff" stroke="none" />
      </svg>
      <svg viewBox="0 0 24 20" className="ml-[12px] w-6" fill="none" stroke="#fff" strokeWidth="1.700">
        <path d="M1 7h4l5-5v16l-5-5H1z" />
        <path d="M13 7q2 3 0 6" />
        <path d="M16 4.500q4 5.500 0 11M19 2q6 8 0 16" stroke="#7d6765" />
      </svg>
      <svg viewBox="0 0 25 16" className="ml-[11px] w-[25px]" fill="none" stroke="#fff" strokeWidth="1.800">
        <rect x="1" y="1" width="20" height="14" rx="3" />
        <path d="M22 6h1.500v4H22z" fill="#fff" />
        <path d="M5 4v8" strokeWidth="3" />
      </svg>
      <div className="ml-[21px] flex w-[98px] flex-col pb-[2px] text-right text-[17px] leading-[24px]">
        <span>22:44</span>
        <span className="tracking-[0.3px]">29/10/2023</span>
      </div>
      <svg viewBox="0 0 20 24" className="mr-[32px] ml-[12px] w-5" fill="#ecb8ef">
        <path d="M10 0c5 0 8 3.500 8 8v6l2 4v1H0v-1l2-4V8c0-4.500 3-8 8-8z" />
        <path d="M6 21h8q-1.500 3-4 3t-4-3z" />
      </svg>
    </div>
  </div>
);

export default function App() {
  return (
    <div className="flex h-[1440px] w-[2560px] flex-col overflow-hidden bg-white [font-family:'Open_Sans','DejaVu_Sans',sans-serif]">
      <TabStrip />
      <Toolbar />
      <Bookmarks />
      <div className="flex h-[1204px] shrink-0 overflow-hidden">
        <Page />
        <Scrollbar />
      </div>
      <Taskbar />
    </div>
  );
}
